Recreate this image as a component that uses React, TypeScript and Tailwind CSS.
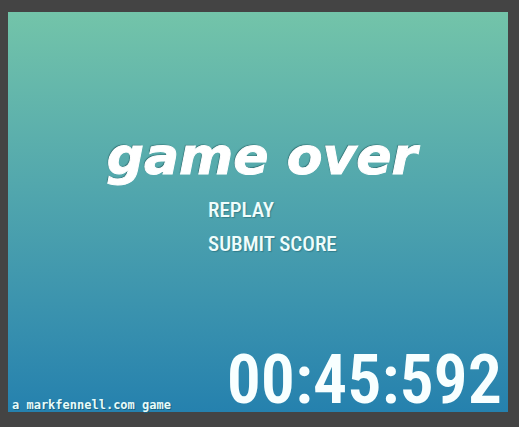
type MenuButtonProps = {
  label: string;
};

function MenuButton({ label }: MenuButtonProps) {
  return (
    <button
      className="cursor-pointer text-left font-['Roboto_Condensed','Roboto',sans-serif] text-[21px] leading-6 font-medium text-[#f0fdfc] [text-shadow:1px_1px_1px_rgba(20,80,90,0.4)]"
      type="button"
    >
      {label}
    </button>
  );
}

function App() {
  return (
    <main className="flex min-h-screen flex-col bg-[#444444] pt-3 pr-[11px] pb-[15px] pl-2">
      <section className="flex flex-1 flex-col justify-between bg-linear-to-b from-[#73c4a9] to-[#2581ae]">
        <div className="flex flex-col pt-[116px]">
          <h1 className="pl-2 text-center font-['DejaVu_Sans',sans-serif] text-[52px] leading-[56px] font-bold whitespace-nowrap text-white italic [-webkit-text-stroke:1px_white] [text-shadow:-1px_-1px_1px_rgba(20,70,75,0.6)]">
            game over
          </h1>
          <nav className="ml-[40%] flex flex-col items-start gap-2.5 pt-3.5">
            <MenuButton label="REPLAY" />
            <MenuButton label="SUBMIT SCORE" />
          </nav>
        </div>

        <footer className="flex items-end justify-between pr-1.5 pl-1">
          <a
            className="font-['DejaVu_Sans_Mono',monospace] text-[12px] leading-[14px] font-bold whitespace-nowrap text-[#e6fbfa] [text-shadow:1px_1px_0_#17617f]"
            href="#markfennell"
          >
            a markfennell.com game
          </a>
          <time className="font-['Roboto_Condensed','Roboto',sans-serif] text-[68px] leading-[64px] font-semibold text-[#f8ffff]">
            00:45:592
          </time>
        </footer>
      </section>
    </main>
  );
}

export default App;
